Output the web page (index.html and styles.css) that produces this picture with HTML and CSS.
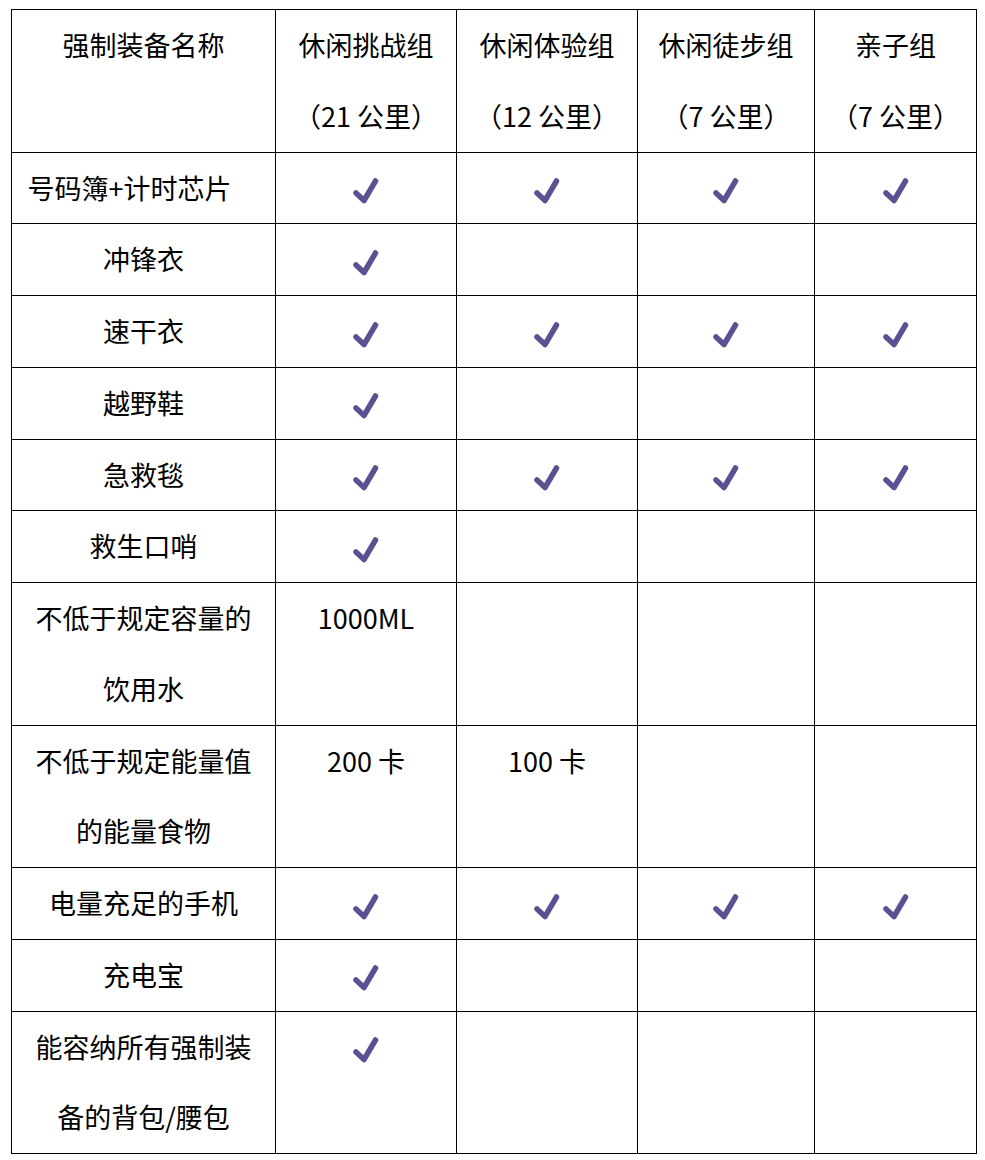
FILE: index.html
```html
<!DOCTYPE html>
<html lang="zh-CN">
<head>
<meta charset="utf-8">
<title>强制装备</title>
<link rel="stylesheet" href="styles.css">
</head>
<body>
<table class="gear">
  <colgroup>
    <col class="c-name">
    <col class="c-a">
    <col class="c-b">
    <col class="c-c">
    <col class="c-d">
  </colgroup>
  <thead>
    <tr>
      <th>强制装备名称</th>
      <th>休闲挑战组<br>（21 公里）</th>
      <th>休闲体验组<br>（12 公里）</th>
      <th>休闲徒步组<br>（7 公里）</th>
      <th>亲子组<br>（7 公里）</th>
    </tr>
  </thead>
  <tbody>
    <tr><td class="shift">号码簿+计时芯片</td><td><svg class="ck" viewBox="0 0 28 28"><path d="M4 16 L12 23.5 L23.5 4"/></svg></td><td><svg class="ck" viewBox="0 0 28 28"><path d="M4 16 L12 23.5 L23.5 4"/></svg></td><td><svg class="ck" viewBox="0 0 28 28"><path d="M4 16 L12 23.5 L23.5 4"/></svg></td><td><svg class="ck" viewBox="0 0 28 28"><path d="M4 16 L12 23.5 L23.5 4"/></svg></td></tr>
    <tr><td>冲锋衣</td><td><svg class="ck" viewBox="0 0 28 28"><path d="M4 16 L12 23.5 L23.5 4"/></svg></td><td></td><td></td><td></td></tr>
    <tr><td>速干衣</td><td><svg class="ck" viewBox="0 0 28 28"><path d="M4 16 L12 23.5 L23.5 4"/></svg></td><td><svg class="ck" viewBox="0 0 28 28"><path d="M4 16 L12 23.5 L23.5 4"/></svg></td><td><svg class="ck" viewBox="0 0 28 28"><path d="M4 16 L12 23.5 L23.5 4"/></svg></td><td><svg class="ck" viewBox="0 0 28 28"><path d="M4 16 L12 23.5 L23.5 4"/></svg></td></tr>
    <tr><td>越野鞋</td><td><svg class="ck" viewBox="0 0 28 28"><path d="M4 16 L12 23.5 L23.5 4"/></svg></td><td></td><td></td><td></td></tr>
    <tr><td>急救毯</td><td><svg class="ck" viewBox="0 0 28 28"><path d="M4 16 L12 23.5 L23.5 4"/></svg></td><td><svg class="ck" viewBox="0 0 28 28"><path d="M4 16 L12 23.5 L23.5 4"/></svg></td><td><svg class="ck" viewBox="0 0 28 28"><path d="M4 16 L12 23.5 L23.5 4"/></svg></td><td><svg class="ck" viewBox="0 0 28 28"><path d="M4 16 L12 23.5 L23.5 4"/></svg></td></tr>
    <tr><td>救生口哨</td><td><svg class="ck" viewBox="0 0 28 28"><path d="M4 16 L12 23.5 L23.5 4"/></svg></td><td></td><td></td><td></td></tr>
    <tr><td>不低于规定容量的饮用水</td><td>1000ML</td><td></td><td></td><td></td></tr>
    <tr><td>不低于规定能量值的能量食物</td><td>200 卡</td><td>100 卡</td><td></td><td></td></tr>
    <tr><td>电量充足的手机</td><td><svg class="ck" viewBox="0 0 28 28"><path d="M4 16 L12 23.5 L23.5 4"/></svg></td><td><svg class="ck" viewBox="0 0 28 28"><path d="M4 16 L12 23.5 L23.5 4"/></svg></td><td><svg class="ck" viewBox="0 0 28 28"><path d="M4 16 L12 23.5 L23.5 4"/></svg></td><td><svg class="ck" viewBox="0 0 28 28"><path d="M4 16 L12 23.5 L23.5 4"/></svg></td></tr>
    <tr><td>充电宝</td><td><svg class="ck" viewBox="0 0 28 28"><path d="M4 16 L12 23.5 L23.5 4"/></svg></td><td></td><td></td><td></td></tr>
    <tr><td>能容纳所有强制装备的背包/腰包</td><td><svg class="ck" viewBox="0 0 28 28"><path d="M4 16 L12 23.5 L23.5 4"/></svg></td><td></td><td></td><td></td></tr>
  </tbody>
</table>
</body>
</html>
```

FILE: styles.css
```css
html, body {
  margin: 0;
  padding: 0;
  background: #fff;
}

body {
  padding: 9px 0 0 11px;
  font-family: "Noto Sans CJK SC", "Noto Sans", sans-serif;
  color: #000;
}

.gear {
  border-collapse: collapse;
  table-layout: fixed;
  width: 965px;
  font-size: 27px;
  line-height: 70.75px;
}

.c-name { width: 264px; }
.c-a { width: 181px; }
.c-b { width: 181px; }
.c-c { width: 177px; }
.c-d { width: 162px; }

.gear th,
.gear td {
  border: 1px solid #000;
  padding: 0 10px;
  text-align: center;
  vertical-align: top;
  font-weight: normal;
}

.gear td:first-child,
.gear th:first-child {
  padding-left: 20px;
  padding-right: 20px;
}

.gear td.shift {
  padding-left: 6px;
  padding-right: 34px;
  white-space: nowrap;
}

.ck {
  width: 28px;
  height: 28px;
  vertical-align: middle;
  position: relative;
  top: 0;
  fill: none;
  stroke: #5a5192;
  stroke-width: 5.5;
  stroke-linecap: round;
  stroke-linejoin: round;
}
```
